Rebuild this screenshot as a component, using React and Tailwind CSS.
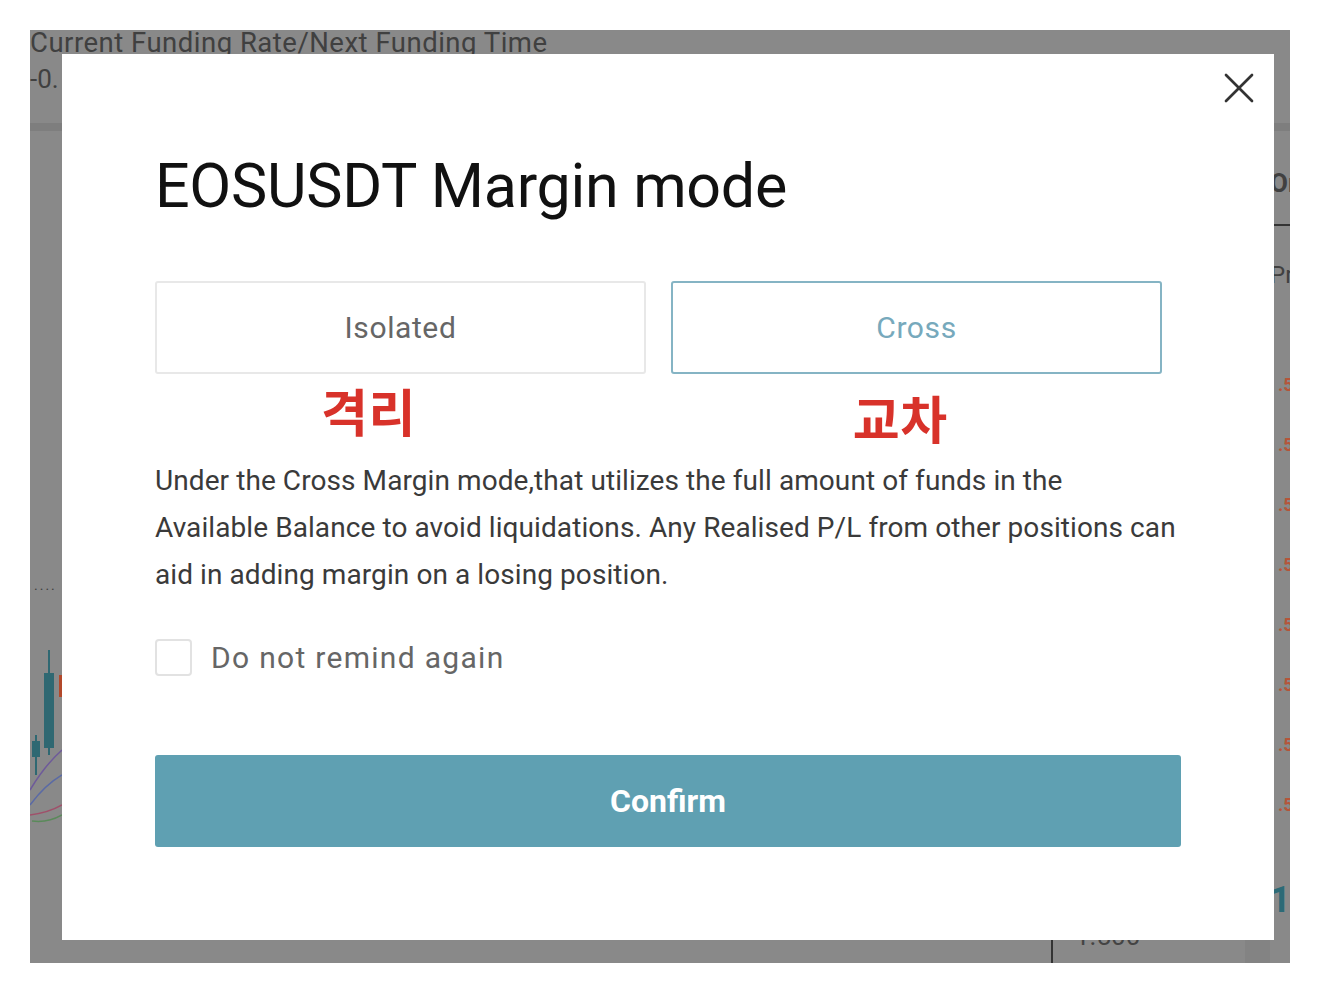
import React, { useState } from 'react'
import { X } from 'lucide-react'

const font = { fontFamily: 'Roboto, "Noto Sans CJK KR", sans-serif' }

const bookRows = ['.5', '.5', '.5', '.5', '.5', '.5', '.5', '.5']

// the trading screen dimmed behind the dialog
function Backdrop() {
  return (
    <div className="flex h-full flex-col text-[#404040]">
      <div className="h-[93px]">
        <p className="-mt-[2px] text-[27.5px] leading-[30px] tracking-[0.5px]">Current Funding Rate/Next Funding Time</p>
        <p className="mt-[6px] text-[26px] leading-[30px]">-0.</p>
      </div>
      <div className="h-[8px] bg-[#7e7e7e]" />
      <div className="flex flex-1">
        <div className="flex w-[1240px] flex-col pt-[447px]">
          <p className="pl-[4px] text-[14px] leading-[14px] tracking-[2px]">....</p>
          <svg className="mt-[53px]" width="32" height="180" viewBox="0 0 32 180">
            <line x1="19" y1="5" x2="19" y2="110" stroke="#2f6872" strokeWidth="2" />
            <rect x="14" y="28" width="10" height="75" fill="#2f6872" />
            <rect x="29" y="30" width="5" height="22" fill="#b2482a" />
            <line x1="6" y1="90" x2="6" y2="130" stroke="#2f6872" strokeWidth="2" />
            <rect x="2" y="96" width="8" height="16" fill="#2f6872" />
            <path d="M0 145 Q 15 120 32 105" stroke="#6e5a9a" strokeWidth="1.5" fill="none" />
            <path d="M0 160 Q 15 140 32 130" stroke="#5a6aa5" strokeWidth="1.5" fill="none" />
            <path d="M0 170 Q 18 168 32 160" stroke="#a0506a" strokeWidth="1.5" fill="none" />
            <path d="M2 176 Q 18 178 32 170" stroke="#5a8a5a" strokeWidth="1.5" fill="none" />
          </svg>
          <div className="mt-auto flex h-[40px] items-end pl-[1021px]">
            <div className="h-[25px] w-[2px] bg-[#333]" />
            <p className="mb-[12px] ml-[22px] text-[26px] leading-[30px] text-[#444]">1.500</p>
            <div className="ml-auto h-[25px] w-[25px] bg-[#838383]" />
          </div>
        </div>
        <div className="flex w-[20px] flex-col">
          <p className="mt-[37px] whitespace-nowrap text-[26px] font-bold leading-[30px]">Or</p>
          <div className="mt-[26px] h-[2px] w-[20px] bg-[#333]" />
          <p className="mt-[34px] whitespace-nowrap text-[24px] leading-[30px]">Pr</p>
          <div className="mt-[85px] flex flex-col gap-[40px]">
            {bookRows.map((v, i) => (
              <span key={i} className="pl-[8px] text-[18px] font-bold leading-[20px] text-[#b5553a]">
                {v}
              </span>
            ))}
          </div>
          <p className="mt-[65px] text-[36px] font-bold leading-[40px] text-[#2c6a76]">1</p>
        </div>
      </div>
    </div>
  )
}

export default function App() {
  const [mode, setMode] = useState('cross')
  const [remind, setRemind] = useState(false)

  const tab = (active) =>
    `h-[93px] flex-1 rounded-[3px] border-2 text-[30px] tracking-[0.6px] ${active ? 'border-[#85b4c4] text-[#77a9bc]' : 'border-[#e8e8e8] text-[#666]'}`

  return (
    <div className="min-h-screen bg-white pl-[30px] pt-[30px]" style={font}>
      <div className="relative h-[933px] w-[1260px] overflow-hidden bg-[#898989]">
        <Backdrop />
        <div className="absolute left-[32px] top-[24px] flex h-[886px] w-[1212px] flex-col bg-white px-[93px] pt-[92px]">
          <button className="absolute right-[9px] top-[8px] text-[#333]">
            <X className="h-[52px] w-[52px]" strokeWidth={1.25} />
          </button>
          <h2 className="text-[61px] font-normal leading-[80px] tracking-[-0.3px] text-[#111]">EOSUSDT Margin mode</h2>
          <div className="mt-[55px] flex w-[1007px] gap-[25px]">
            <button onClick={() => setMode('isolated')} className={tab(mode === 'isolated')}>
              Isolated
            </button>
            <button onClick={() => setMode('cross')} className={tab(mode === 'cross')}>
              Cross
            </button>
          </div>
          <div className="flex h-[75px] text-[51px] font-bold leading-[56px] tracking-[0.5px] text-[#d8322a]">
            <span className="ml-[166px] mt-[13px]">격리</span>
            <span className="ml-[437px] mt-[20px]">교차</span>
          </div>
          <p className="mt-[8px] whitespace-nowrap text-[28px] leading-[47px] tracking-[0.08px] text-[#3a3a3a]">
            Under the Cross Margin mode,that utilizes the full amount of funds in the
            <br />
            Available Balance to avoid liquidations. Any Realised P/L from other positions can
            <br />
            aid in adding margin on a losing position.
          </p>
          <label className="mt-[37px] flex cursor-pointer items-center gap-[19px]">
            <input type="checkbox" checked={remind} onChange={(e) => setRemind(e.target.checked)} className="peer sr-only" />
            <span className="h-[37px] w-[37px] rounded-[4px] border-2 border-[#e2e2e2] peer-checked:border-[#5fa0b2] peer-checked:bg-[#5fa0b2]" />
            <span className="text-[30px] tracking-[1.3px] text-[#666]">Do not remind again</span>
          </label>
          <button className="mt-[75px] h-[92px] w-full rounded-[3px] bg-[#5fa0b2] text-[32px] font-bold text-white">Confirm</button>
        </div>
      </div>
    </div>
  )
}
